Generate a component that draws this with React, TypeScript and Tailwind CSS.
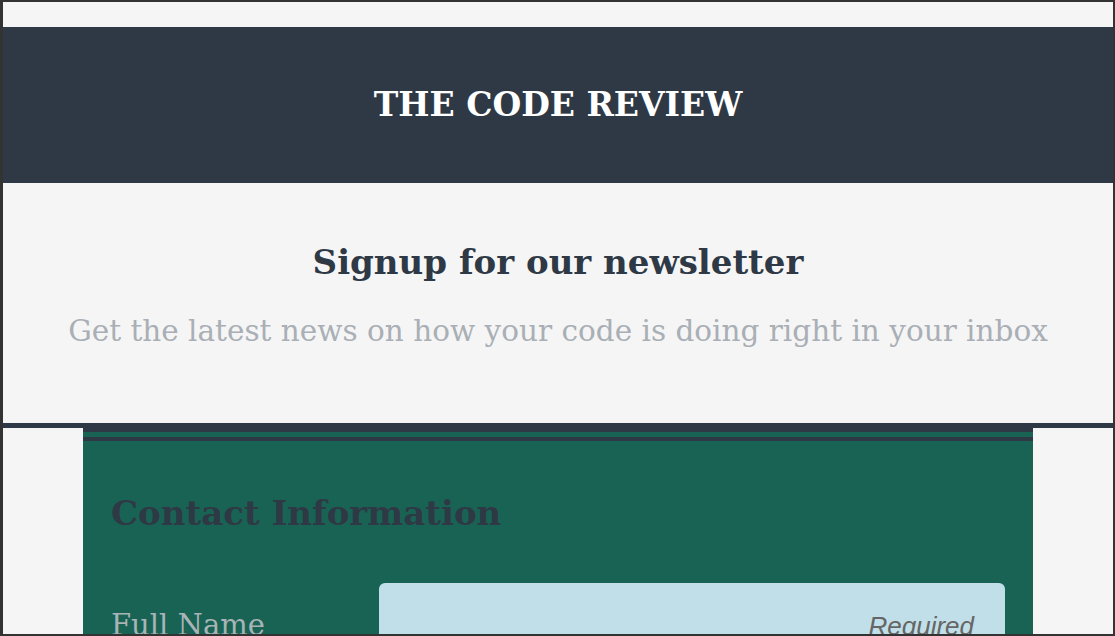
const serif = { fontFamily: '"DejaVu Serif", "Liberation Serif", serif' };

export default function App() {
	return (
		<div
			className="h-[636px] w-[1115px] overflow-hidden border-t-2 border-l-[3px] border-r-2 border-b-2 border-[#333333] bg-[#f5f5f5]"
			style={serif}
		>
			<div className="h-[25px]" />
			<header className="flex h-[156px] items-center justify-center bg-[#2e3945]">
				<h1 className="text-[33px] font-bold text-white">THE CODE REVIEW</h1>
			</header>
			<section className="flex h-[245px] flex-col items-center border-b-[5px] border-[#2e3945] pt-[54px]">
				<h2 className="text-[34px] font-bold leading-[50px] text-[#2e3945]">
					Signup for our newsletter
				</h2>
				<p className="mt-[24px] text-[29.5px] leading-[40px] text-[#a9afb5]">
					Get the latest news on how your code is doing right in your inbox
				</p>
			</section>
			<form className="mx-auto h-[400px] w-[950px] border-t-[13px] border-double border-[#2e3945] bg-[#196354] px-[28px]">
				<h2 className="pt-[47px] text-[34px] font-bold leading-[50px] text-[#2e3945]">
					Contact Information
				</h2>
				<div className="mt-[45px] flex items-start">
					<label className="w-[268px] pt-[22px] text-[29px] leading-[40px] text-[#a8b4b6]">
						Full Name
					</label>
					<div className="flex h-[70px] flex-1 items-start justify-end rounded-[6px] bg-[#c1dfe8] pr-[31px] pt-[28px]">
						<span
							className="text-[26px] italic leading-[30px] text-[#666666]"
							style={{ fontFamily: '"Liberation Sans", Arial, sans-serif' }}
						>
							Required
						</span>
					</div>
				</div>
			</form>
		</div>
	);
}
